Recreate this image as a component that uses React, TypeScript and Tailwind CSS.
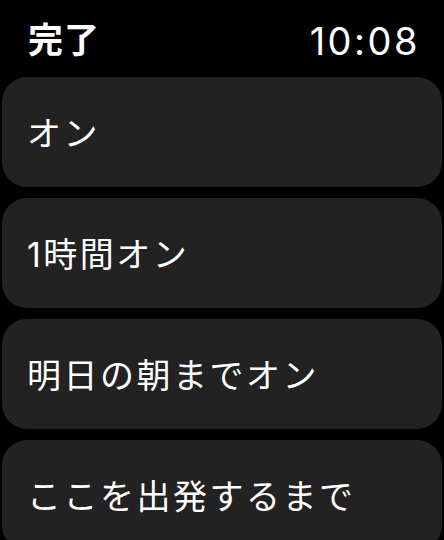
import React from "react";

const ITEMS = ["オン", "1時間オン", "明日の朝までオン", "ここを出発するまで"];

const App: React.FC = () => {
  return (
    <div className="w-[444px] h-[540px] overflow-hidden bg-black text-white font-['Inter','Noto_Sans_CJK_JP',sans-serif]">
      <div className="flex items-center justify-between h-[77px] pl-[28px] pr-[24px] pt-[4px]">
        <span className="text-[35px] font-bold leading-none tracking-[1px]">完了</span>
        <span className="text-[38px] font-normal leading-none tracking-[2.5px]">10:08</span>
      </div>
      <div className="flex flex-col gap-[11px] px-[2px]">
        {ITEMS.map((label) => (
          <div
            key={label}
            className="flex items-center h-[110px] shrink-0 rounded-[25px] bg-[#222222] pl-[25px]"
          >
            <span className="text-[34px] font-normal leading-none pt-[4px] tracking-[2.5px]">{label}</span>
          </div>
        ))}
      </div>
    </div>
  );
};

export default App;
